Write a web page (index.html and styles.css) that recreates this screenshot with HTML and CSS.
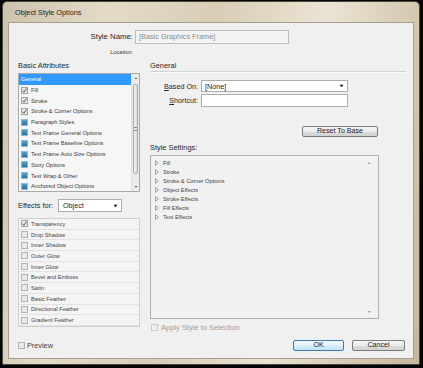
FILE: index.html
```html
<!doctype html>
<html lang="en">
 <head>
  <meta charset="UTF-8">
  <title>Object Style Options</title>
  <link rel="stylesheet" href="styles.css">
 </head>
 <body>
  <div class="window">
   <div class="titlebar">Object Style Options</div>
   <div class="client">
    <div class="name-row">
     <div class="name-label">Style Name:</div>
     <div class="name-input">[Basic Graphics Frame]</div>
    </div>
    <div class="location">Location:</div>

    <div class="main">
     <div class="left">
      <div class="section-label">Basic Attributes</div>
      <div class="attr-list">
       <div class="rows">
        <div class="row selected">General</div>
        <div class="row"><svg class="cb" viewBox="0 0 7 7"><rect x="0.5" y="0.5" width="6" height="6" fill="#e6e6e6" stroke="#a3a3a3"/><path d="M1.5 3.7 L2.9 5.2 L5.6 1.5" fill="none" stroke="#4a4a4a" stroke-width="0.9"/></svg>Fill</div>
        <div class="row"><svg class="cb" viewBox="0 0 7 7"><rect x="0.5" y="0.5" width="6" height="6" fill="#e6e6e6" stroke="#a3a3a3"/><path d="M1.5 3.7 L2.9 5.2 L5.6 1.5" fill="none" stroke="#4a4a4a" stroke-width="0.9"/></svg>Stroke</div>
        <div class="row"><svg class="cb" viewBox="0 0 7 7"><rect x="0.5" y="0.5" width="6" height="6" fill="#e6e6e6" stroke="#a3a3a3"/><path d="M1.5 3.7 L2.9 5.2 L5.6 1.5" fill="none" stroke="#4a4a4a" stroke-width="0.9"/></svg>Stroke &amp; Corner Options</div>
        <div class="row"><span class="ignore"></span>Paragraph Styles</div>
        <div class="row"><span class="ignore"></span>Text Frame General Options</div>
        <div class="row"><span class="ignore"></span>Text Frame Baseline Options</div>
        <div class="row"><span class="ignore"></span>Text Frame Auto Size Options</div>
        <div class="row"><span class="ignore"></span>Story Options</div>
        <div class="row"><span class="ignore"></span>Text Wrap &amp; Other</div>
        <div class="row"><span class="ignore"></span>Anchored Object Options</div>
       </div>
       <div class="scrollbar">
        <svg class="arrow" viewBox="0 0 8 9"><polygon points="2.5,5 4,3.5 5.5,5" fill="#555"/></svg>
        <div class="track"><div class="thumb"><span class="grip"></span></div></div>
        <svg class="arrow" viewBox="0 0 8 9"><polygon points="2.5,4 4,5.5 5.5,4" fill="#555"/></svg>
       </div>
      </div>

      <div class="effects-row">
       <div class="effects-label">Effects for:</div>
       <div class="dropdown small">Object<svg class="dd-arrow" viewBox="0 0 6 4"><polygon points="0.5,0.5 5.5,0.5 3,3.5" fill="#222"/></svg></div>
      </div>

      <div class="effects-list">
       <div class="erow"><svg class="cb" viewBox="0 0 7 7"><rect x="0.5" y="0.5" width="6" height="6" fill="#e6e6e6" stroke="#a3a3a3"/><path d="M1.5 3.7 L2.9 5.2 L5.6 1.5" fill="none" stroke="#4a4a4a" stroke-width="0.9"/></svg>Transparency</div>
       <div class="erow"><span class="box"></span>Drop Shadow</div>
       <div class="erow"><span class="box"></span>Inner Shadow</div>
       <div class="erow"><span class="box"></span>Outer Glow</div>
       <div class="erow"><span class="box"></span>Inner Glow</div>
       <div class="erow"><span class="box"></span>Bevel and Emboss</div>
       <div class="erow"><span class="box"></span>Satin</div>
       <div class="erow"><span class="box"></span>Basic Feather</div>
       <div class="erow"><span class="box"></span>Directional Feather</div>
       <div class="erow"><span class="box"></span>Gradient Feather</div>
      </div>
     </div>

     <div class="right">
      <div class="heading">General</div>
      <div class="form-row">
       <div class="form-label"><u>B</u>ased On:</div>
       <div class="dropdown wide">[None]<svg class="dd-arrow" viewBox="0 0 6 4"><polygon points="0.5,0.5 5.5,0.5 3,3.5" fill="#222"/></svg></div>
      </div>
      <div class="form-row tall">
       <div class="form-label"><u>S</u>hortcut:</div>
       <div class="textbox"></div>
      </div>
      <button class="btn reset">Reset To Base</button>
      <div class="settings-label">Style Settings:</div>
      <div class="settings-box">
       <div class="settings-items">
        <div class="sitem"><svg class="tri" viewBox="0 0 5 7"><polygon points="0.6,0.6 4.4,3.5 0.6,6.4" fill="none" stroke="#777" stroke-width="0.8"/></svg>Fill</div>
        <div class="sitem"><svg class="tri" viewBox="0 0 5 7"><polygon points="0.6,0.6 4.4,3.5 0.6,6.4" fill="none" stroke="#777" stroke-width="0.8"/></svg>Stroke</div>
        <div class="sitem"><svg class="tri" viewBox="0 0 5 7"><polygon points="0.6,0.6 4.4,3.5 0.6,6.4" fill="none" stroke="#777" stroke-width="0.8"/></svg>Stroke &amp; Corner Options</div>
        <div class="sitem"><svg class="tri" viewBox="0 0 5 7"><polygon points="0.6,0.6 4.4,3.5 0.6,6.4" fill="none" stroke="#777" stroke-width="0.8"/></svg>Object Effects</div>
        <div class="sitem"><svg class="tri" viewBox="0 0 5 7"><polygon points="0.6,0.6 4.4,3.5 0.6,6.4" fill="none" stroke="#777" stroke-width="0.8"/></svg>Stroke Effects</div>
        <div class="sitem"><svg class="tri" viewBox="0 0 5 7"><polygon points="0.6,0.6 4.4,3.5 0.6,6.4" fill="none" stroke="#777" stroke-width="0.8"/></svg>Fill Effects</div>
        <div class="sitem"><svg class="tri" viewBox="0 0 5 7"><polygon points="0.6,0.6 4.4,3.5 0.6,6.4" fill="none" stroke="#777" stroke-width="0.8"/></svg>Text Effects</div>
       </div>
       <div class="settings-scroll">
        <svg class="sarrow" viewBox="0 0 6 6"><polygon points="1.5,3.8 3,2.3 4.5,3.8" fill="#888"/></svg>
        <svg class="sarrow" viewBox="0 0 6 6"><polygon points="1.5,2.3 3,3.8 4.5,2.3" fill="#888"/></svg>
       </div>
      </div>
      <div class="apply-row"><span class="box disabled"></span>Apply Style to Selection</div>
     </div>
    </div>

    <div class="footer">
     <div class="preview"><span class="box"></span>Preview</div>
     <button class="btn ok">OK</button>
     <button class="btn cancel">Cancel</button>
    </div>
   </div>
  </div>
 </body>
</html>
```

FILE: styles.css
```css
* {
    box-sizing: border-box;
}

body {
    margin: 0;
    width: 423px;
    height: 368px;
    background: #060606;
    font-family: 'Liberation Sans', Arial, sans-serif;
    overflow: hidden;
}

.window {
    margin: 1px 0 0 2px;
    width: 418px;
    height: 364px;
    border: 1px solid #4b463e;
    border-radius: 5px 5px 0 0;
    background: linear-gradient(100deg, #cdc2ab 0%, #e3dac8 22%, #d9cdb6 45%, #ebe3d4 68%, #d3c6ad 88%, #c6b89e 100%);
    padding: 0 5px 5px 5px;
    display: flex;
    flex-direction: column;
}

.titlebar {
    height: 20px;
    line-height: 22px;
    padding-left: 7px;
    font-size: 7.3px;
    color: #1c1c1c;
}

.client {
    flex: 1;
    background: #f0f0f0;
    box-shadow: inset 0 0 0 1px #a69e90;
    padding-top: 8px;
    display: flex;
    flex-direction: column;
}

/* top: style name */
.name-row {
    display: flex;
    height: 14px;
}

.name-label {
    width: 125px;
    text-align: right;
    margin-right: 2px;
    font-size: 7.8px;
    line-height: 14px;
    color: #262626;
}

.name-input {
    width: 154px;
    height: 14px;
    border: 1px solid #bdbdbd;
    background: #f3f3f3;
    color: #8c8c8c;
    font-size: 7.3px;
    line-height: 12px;
    padding-left: 3px;
}

.location {
    margin-top: 4px;
    width: 125px;
    height: 8px;
    text-align: right;
    font-size: 5.6px;
    line-height: 8px;
    color: #3a3a3a;
}

.main {
    display: flex;
    margin-top: 5px;
    padding-left: 10px;
}

/* left column */
.left {
    width: 122px;
    display: flex;
    flex-direction: column;
}

.section-label {
    height: 10px;
    line-height: 10px;
    font-size: 7.4px;
    color: #262626;
}

.attr-list {
    margin-top: 2px;
    height: 119px;
    border: 1px solid #a9a9a9;
    background: #f6f6f6;
    display: flex;
}

.rows {
    flex: 1;
    overflow: hidden;
}

.row {
    height: 10.7px;
    display: flex;
    align-items: center;
    padding-left: 2px;
    font-size: 5.65px;
    color: #3a3a3a;
    white-space: nowrap;
}

.row.selected {
    background: #3399ff;
    color: #fff;
}

.cb {
    width: 7px;
    height: 7px;
    margin-right: 3px;
    flex: none;
}

.ignore {
    width: 7px;
    height: 7px;
    margin-right: 3px;
    flex: none;
    background: linear-gradient(#5aa0cc, #246f9f);
    border: 1px solid #8cbcd9;
}

.scrollbar {
    width: 8px;
    display: flex;
    flex-direction: column;
    background: #ececec;
    border-left: 1px solid #e0e0e0;
}

.arrow {
    width: 8px;
    height: 9px;
    flex: none;
}

.track {
    flex: 1;
    padding: 1px 0 8px 0;
}

.thumb {
    height: 100%;
    margin: 0 1px;
    border: 1px solid #a8a8a8;
    border-radius: 2px;
    background: linear-gradient(90deg, #f4f4f4, #dadada);
    display: flex;
    align-items: center;
    justify-content: center;
}

.grip {
    width: 3px;
    height: 4px;
    border-top: 1px solid #888;
    border-bottom: 1px solid #888;
    position: relative;
}

.effects-row {
    margin-top: 7px;
    height: 13px;
    display: flex;
    align-items: center;
}

.effects-label {
    width: 40px;
    font-size: 7.4px;
    color: #262626;
}

.dropdown {
    height: 13px;
    border: 1px solid #adadad;
    background: #fff;
    font-size: 7.2px;
    color: #222;
    padding-left: 4px;
    display: flex;
    align-items: center;
    justify-content: space-between;
}

.dropdown.small {
    width: 64px;
}

.dropdown.wide {
    width: 147px;
    height: 12px;
    padding-left: 3px;
}

.dd-arrow {
    width: 5px;
    height: 4px;
    margin-right: 3px;
}

.effects-list {
    margin-top: 6px;
    height: 109px;
    border: 1px solid #cfcfcf;
    background: #f4f4f4;
}

.erow {
    height: 10.7px;
    display: flex;
    align-items: center;
    padding-left: 2px;
    border-bottom: 1px solid #e3e3e3;
    font-size: 5.65px;
    color: #444;
    white-space: nowrap;
}

.box {
    width: 7px;
    height: 7px;
    margin-right: 3px;
    flex: none;
    border: 1px solid #b3b3b3;
    background: #e9e9e9;
}

/* right column */
.right {
    margin-left: 10px;
    width: 256px;
    display: flex;
    flex-direction: column;
    align-items: flex-start;
}

.heading {
    width: 100%;
    height: 11px;
    line-height: 10px;
    font-size: 7.4px;
    color: #262626;
    border-bottom: 1px solid #d3d3d3;
    box-shadow: 0 1px 0 #fbfbfb;
}

.form-row {
    margin-top: 8px;
    height: 12px;
    display: flex;
    align-items: center;
}

.form-row.tall {
    margin-top: 2px;
    height: 13px;
}

.form-label {
    width: 48px;
    margin-right: 3px;
    text-align: right;
    font-size: 7.2px;
    color: #262626;
}

.form-label u {
    text-decoration-thickness: 0.5px;
}

.textbox {
    width: 147px;
    height: 13px;
    border: 1px solid #adadad;
    background: #fff;
}

.btn {
    font-family: 'Liberation Sans', Arial, sans-serif;
    font-size: 7.1px;
    color: #222;
    padding: 0;
    height: 11px;
    line-height: 9px;
    border: 1px solid #7a7a7a;
    border-radius: 2px;
    background: linear-gradient(#f6f6f6 0%, #ebebeb 50%, #dddddd 51%, #d2d2d2 100%);
}

.reset {
    margin-top: 19px;
    margin-left: 152px;
    width: 76px;
}

.settings-label {
    margin-top: 6px;
    height: 10px;
    line-height: 10px;
    font-size: 7.4px;
    color: #262626;
}

.settings-box {
    margin-top: 2px;
    width: 229px;
    height: 164px;
    border: 1px solid #b0b0b0;
    background: #f1f1f1;
    display: flex;
}

.settings-items {
    flex: 1;
    padding: 2px 0 0 4px;
}

.sitem {
    height: 9px;
    display: flex;
    align-items: center;
    font-size: 5.65px;
    color: #444;
}

.tri {
    width: 4px;
    height: 6px;
    margin-right: 4px;
}

.settings-scroll {
    width: 12px;
    display: flex;
    flex-direction: column;
    justify-content: space-between;
    padding: 4px 0 3px 0;
}

.sarrow {
    width: 6px;
    height: 6px;
}

.apply-row {
    margin-top: 4px;
    height: 8px;
    display: flex;
    align-items: center;
    padding-left: 1px;
    font-size: 7.5px;
    color: #a0a0a0;
}

.box.disabled {
    border-color: #cacaca;
    background: #f0f0f0;
}

/* bottom buttons */
.footer {
    margin-top: 9px;
    height: 11px;
    display: flex;
    align-items: center;
    padding: 0 9px 0 10px;
}

.preview {
    flex: 1;
    display: flex;
    align-items: center;
    font-size: 7.3px;
    color: #444;
}

.preview .box {
    margin-right: 2px;
}

.ok {
    width: 51px;
    border-color: #3d7bad;
    background: linear-gradient(#f2f9fd 0%, #e3f1fa 50%, #d2e9f7 51%, #c6e3f5 100%);
}

.cancel {
    width: 53px;
    margin-left: 8px;
}
```
